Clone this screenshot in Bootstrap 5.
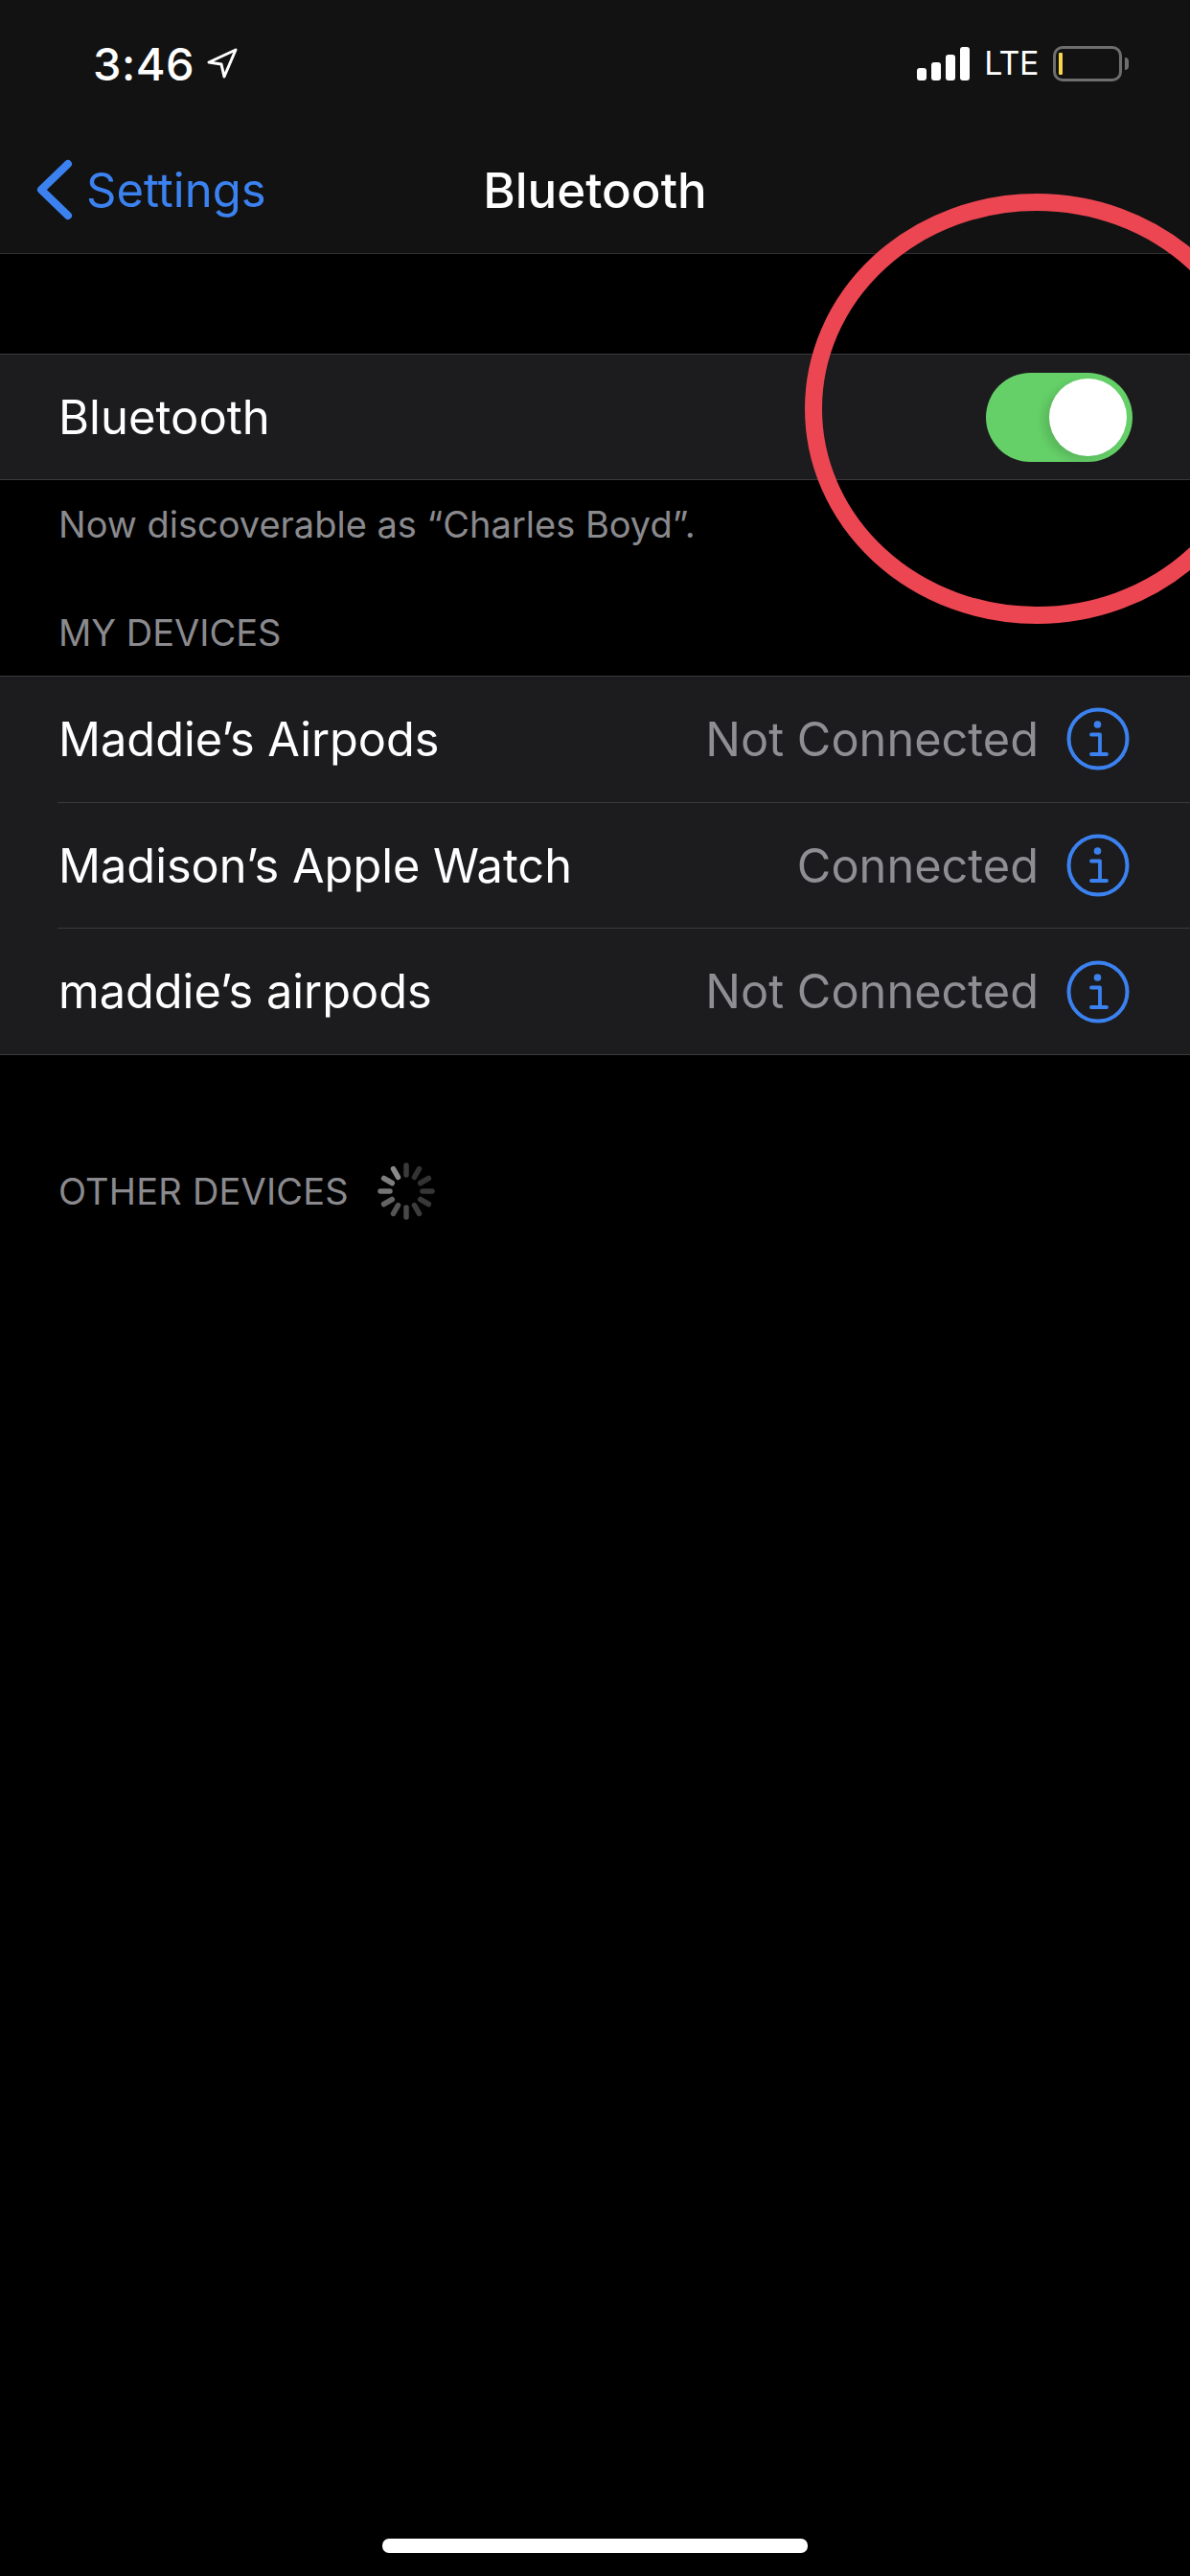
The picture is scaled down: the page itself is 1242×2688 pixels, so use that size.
<!DOCTYPE html>
<html lang="en">
<head>
<meta charset="utf-8">
<title>Bluetooth</title>
<link rel="stylesheet" href="https://cdn.jsdelivr.net/npm/bootstrap@5.3.0/dist/css/bootstrap.min.css">
<style>
html,body{background:#000;margin:0}
body{font-family:Inter,"Liberation Sans",sans-serif;color:#fff;width:1242px;height:2688px;overflow:hidden}
.page-wrap{height:2688px;position:relative}
.top-chrome{background:#121212;border-bottom:1px solid #2e2e30;height:265px}
.status-row{height:132px;padding:0 64px 0 97px}
.clock{font-size:47px;font-weight:500;letter-spacing:.5px;line-height:1}
.arrow-gap{gap:13px}
.lte{font-size:34px;font-weight:400;line-height:1;letter-spacing:-.5px;margin:0 15px 0 15px}
.sig-wrap{gap:5px}
.sig-bar{width:10px;background:#fff;border-radius:3px;display:block}
.batt-shell{width:72px;height:37px;border:3px solid #6e6e6e;border-radius:10px;padding:4px 3px;display:block}
.batt-fill{display:block;width:4px;height:100%;background:#f6d64e;border-radius:1px}
.batt-nub{width:4px;height:13px;background:#6e6e6e;border-radius:0 4px 4px 0;margin-left:3px;display:block}
.nav-grid{display:grid;grid-template-columns:1fr auto 1fr;height:132px;padding:0 38px;align-items:center}
.back-link{color:#3b82f0;font-size:49px;text-decoration:none;line-height:1;gap:14px}
.nav-heading{font-size:51px;font-weight:500;margin:0;line-height:1}
.sheet-row{background:#1c1c1e;height:130px;padding:0 0 0 61px;color:#fff;font-size:49px;line-height:1}
.tall-row{height:130.67px;border-radius:0;font-size:48.7px}
.row-label{padding-top:2px}
.group-box{border-top:1px solid #3a3a3c;border-bottom:1px solid #3a3a3c;background:#1c1c1e}
.group-box .list-group-item{border-radius:0}
.sep-line{border-bottom:1px solid #3a3a3c;margin-left:60px}
.switch-end{padding-right:60px}
.row-end{padding-right:63px;height:100%}
.state-label{color:#8e8e93;font-size:48.7px;margin-right:29px;padding-top:2px}
.foot-note{color:#8a8a8e;font-size:38px;line-height:1;padding:0 0 0 61px;margin:0}
.sect-head{color:#8a8a8e;font-size:38px;font-weight:400;line-height:1;padding:0 0 0 61px;margin:0}
.wide-head{letter-spacing:.2px}
.switch-track{width:153px;height:93px;border-radius:47px;background:#65d068;padding:6px;display:flex;justify-content:flex-end}
.switch-knob{width:81px;height:81px;border-radius:50%;background:#fff;box-shadow:-6px 4px 10px rgba(0,0,0,.12);display:block}
.gap-top{height:104px}
.note-wrap{height:140px;padding-top:27px}
.head-mine{height:64px}
.head-other{margin-top:112px;height:60px}
.spin-gap{margin-left:30px}
.home-bar{width:444px;height:15px;border-radius:7px;background:#fff;position:absolute;left:399px;top:2649px}
.mark-ring{position:absolute;left:0;top:0;pointer-events:none}
</style>
</head>
<body>
<div class="page-wrap">
  <div class="top-chrome">
    <div class="status-row d-flex align-items-center justify-content-between">
      <div class="d-flex align-items-center arrow-gap">
        <span class="clock">3:46</span>
        <svg width="32" height="32" viewBox="0 0 32 32" aria-hidden="true"><path d="M30 2 2 15l13 2 3 13z" fill="none" stroke="#fff" stroke-width="3" stroke-linejoin="round"/></svg>
      </div>
      <div class="d-flex align-items-center">
        <span class="d-flex align-items-end sig-wrap">
          <span class="sig-bar" style="height:13px"></span>
          <span class="sig-bar" style="height:19px"></span>
          <span class="sig-bar" style="height:27px"></span>
          <span class="sig-bar" style="height:35px"></span>
        </span>
        <span class="lte">LTE</span>
        <span class="batt-shell"><span class="batt-fill"></span></span>
        <span class="batt-nub"></span>
      </div>
    </div>
    <div class="nav-grid">
      <a class="back-link d-flex align-items-center" href="#">
        <svg width="38" height="64" viewBox="0 0 38 64" aria-hidden="true"><path d="M33 5 5 32l28 27" fill="none" stroke="#3b82f0" stroke-width="8" stroke-linecap="round" stroke-linejoin="round"/></svg>
        <span>Settings</span>
      </a>
      <h1 class="nav-heading">Bluetooth</h1>
      <span></span>
    </div>
  </div>

  <div class="gap-top"></div>

  <div class="group-box">
    <div class="sheet-row d-flex align-items-center justify-content-between">
      <span>Bluetooth</span>
      <span class="switch-end d-flex align-items-center">
        <span class="switch-track"><span class="switch-knob"></span></span>
      </span>
    </div>
  </div>
  <div class="note-wrap"><p class="foot-note">Now discoverable as “Charles Boyd”.</p></div>
  <div class="head-mine"><h2 class="sect-head">MY DEVICES</h2></div>

  <div class="group-box list-group list-group-flush">
    <div class="list-group-item border-0 sheet-row tall-row d-flex align-items-center justify-content-between">
      <span class="row-label">Maddie’s Airpods</span>
      <span class="row-end d-flex align-items-center"><span class="state-label">Not Connected</span>
        <svg width="66" height="66" viewBox="0 0 66 66" aria-hidden="true"><circle cx="33" cy="33" r="30.5" fill="none" stroke="#3b82f0" stroke-width="4"/><circle cx="32.500" cy="18" r="3.800" fill="#3b82f0"/><path d="M26 28.500h9v20.500M26 49h16" fill="none" stroke="#3b82f0" stroke-width="3.800" stroke-linecap="round" stroke-linejoin="round"/></svg>
      </span>
    </div>
    <div class="sep-line"></div>
    <div class="list-group-item border-0 sheet-row tall-row d-flex align-items-center justify-content-between">
      <span class="row-label">Madison’s Apple Watch</span>
      <span class="row-end d-flex align-items-center"><span class="state-label">Connected</span>
        <svg width="66" height="66" viewBox="0 0 66 66" aria-hidden="true"><circle cx="33" cy="33" r="30.5" fill="none" stroke="#3b82f0" stroke-width="4"/><circle cx="32.500" cy="18" r="3.800" fill="#3b82f0"/><path d="M26 28.500h9v20.500M26 49h16" fill="none" stroke="#3b82f0" stroke-width="3.800" stroke-linecap="round" stroke-linejoin="round"/></svg>
      </span>
    </div>
    <div class="sep-line"></div>
    <div class="list-group-item border-0 sheet-row tall-row d-flex align-items-center justify-content-between">
      <span class="row-label">maddie’s airpods</span>
      <span class="row-end d-flex align-items-center"><span class="state-label">Not Connected</span>
        <svg width="66" height="66" viewBox="0 0 66 66" aria-hidden="true"><circle cx="33" cy="33" r="30.5" fill="none" stroke="#3b82f0" stroke-width="4"/><circle cx="32.500" cy="18" r="3.800" fill="#3b82f0"/><path d="M26 28.500h9v20.500M26 49h16" fill="none" stroke="#3b82f0" stroke-width="3.800" stroke-linecap="round" stroke-linejoin="round"/></svg>
      </span>
    </div>
  </div>

  <div class="head-other d-flex align-items-center">
    <h2 class="sect-head wide-head">OTHER DEVICES</h2>
    <svg class="spin-gap" width="60" height="60" viewBox="-30 -30 60 60" aria-hidden="true" stroke-width="5.500" stroke-linecap="round">
      <line stroke="#3a3a3a" x1="0" y1="-27" x2="0" y2="-17"/>
      <line stroke="#333" x1="0" y1="-27" x2="0" y2="-17" transform="rotate(30)"/>
      <line stroke="#333" x1="0" y1="-27" x2="0" y2="-17" transform="rotate(60)"/>
      <line stroke="#363636" x1="0" y1="-27" x2="0" y2="-17" transform="rotate(90)"/>
      <line stroke="#383838" x1="0" y1="-27" x2="0" y2="-17" transform="rotate(120)"/>
      <line stroke="#3c3c3c" x1="0" y1="-27" x2="0" y2="-17" transform="rotate(150)"/>
      <line stroke="#484848" x1="0" y1="-27" x2="0" y2="-17" transform="rotate(180)"/>
      <line stroke="#555" x1="0" y1="-27" x2="0" y2="-17" transform="rotate(210)"/>
      <line stroke="#646464" x1="0" y1="-27" x2="0" y2="-17" transform="rotate(240)"/>
      <line stroke="#757575" x1="0" y1="-27" x2="0" y2="-17" transform="rotate(270)"/>
      <line stroke="#7e7e7e" x1="0" y1="-27" x2="0" y2="-17" transform="rotate(300)"/>
      <line stroke="#8a8a8a" x1="0" y1="-27" x2="0" y2="-17" transform="rotate(330)"/>
    </svg>
  </div>

  <svg class="mark-ring" width="1242" height="700" viewBox="0 0 1242 700" aria-hidden="true"><ellipse cx="1082" cy="426.500" rx="233" ry="215.500" fill="none" stroke="#ec4652" stroke-width="18"/></svg>
  <div class="home-bar"></div>
</div>
</body>
</html>
